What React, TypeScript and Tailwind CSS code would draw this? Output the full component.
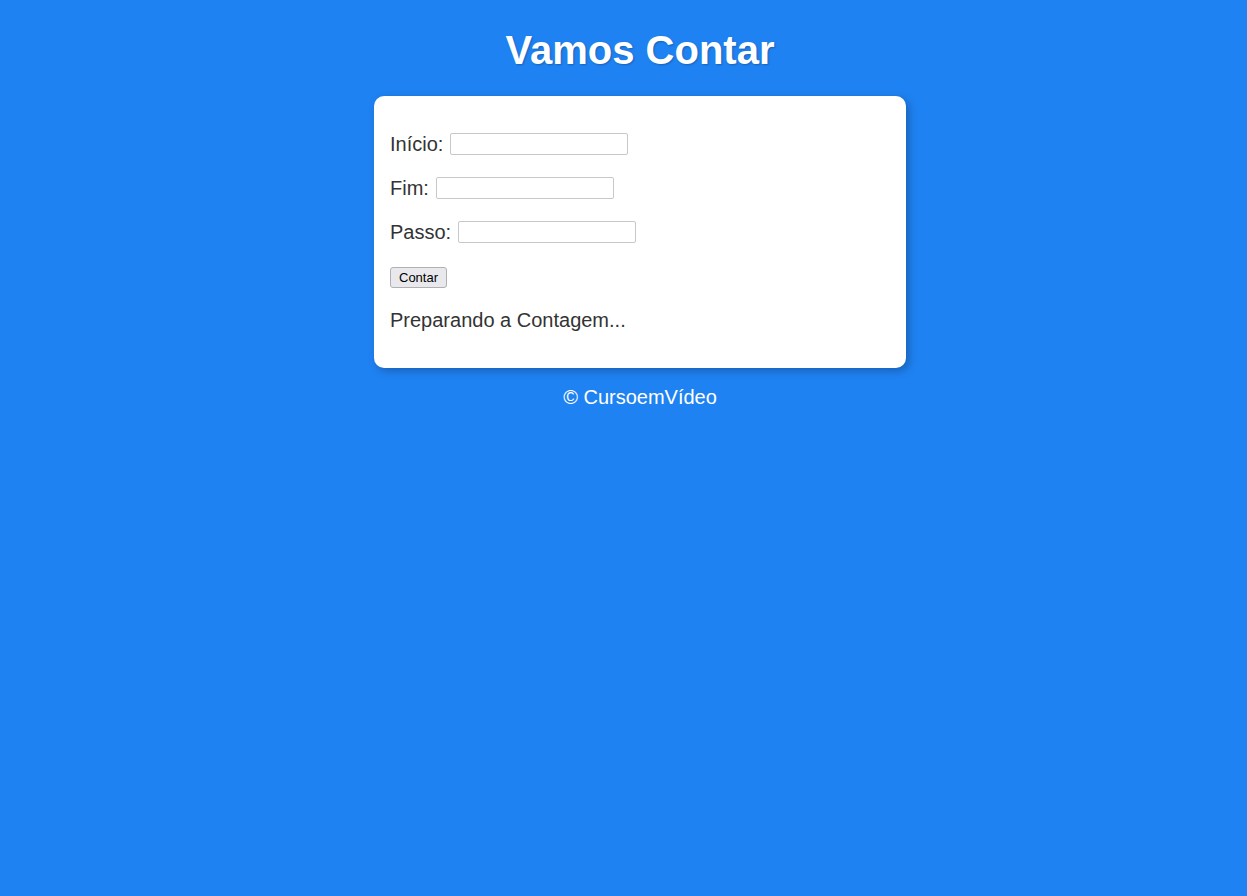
import React from "react";

export default function App() {
  return (
    <div
      className="min-h-[896px] bg-[#1f82f2] pt-px pl-[33px] text-[20px] text-black"
      style={{ fontFamily: '"Liberation Sans", Arial, sans-serif' }}
    >
      <header className="text-center text-white">
        <h1 className="mt-[26px] mb-[23px] text-[40px] font-bold leading-[46px] [text-shadow:1px_1px_2px_rgba(0,0,0,0.25)]">
          Vamos Contar
        </h1>
      </header>
      <section className="mx-auto w-[532px] rounded-[10px] bg-white px-4 py-4 shadow-[3px_3px_8px_rgba(0,0,0,0.25)]">
        <p className="my-5 flex items-center gap-[7px] leading-[24px] text-[#333]">
          Início:
          <input className="h-[22px] w-[178px] rounded-[2px] border border-[#c8c8c8] bg-white" />
        </p>
        <p className="my-5 flex items-center gap-[7px] leading-[24px] text-[#333]">
          Fim:
          <input className="h-[22px] w-[178px] rounded-[2px] border border-[#c8c8c8] bg-white" />
        </p>
        <p className="my-5 flex items-center gap-[7px] leading-[24px] text-[#333]">
          Passo:
          <input className="h-[22px] w-[178px] rounded-[2px] border border-[#c8c8c8] bg-white" />
        </p>
        <p className="my-5 flex h-[24px] items-center pt-[3px]">
          <button className="h-[21px] rounded-[3px] border border-[#b0b0b0] bg-[#e9e9ed] px-[8px] text-[13px] leading-none text-black">
            Contar
          </button>
        </p>
        <div className="my-5 leading-[24px] text-[#333]">Preparando a Contagem...</div>
      </section>
      <footer className="mt-[18px] text-center leading-[23px] text-white">
        <p>© CursoemVídeo</p>
      </footer>
    </div>
  );
}
